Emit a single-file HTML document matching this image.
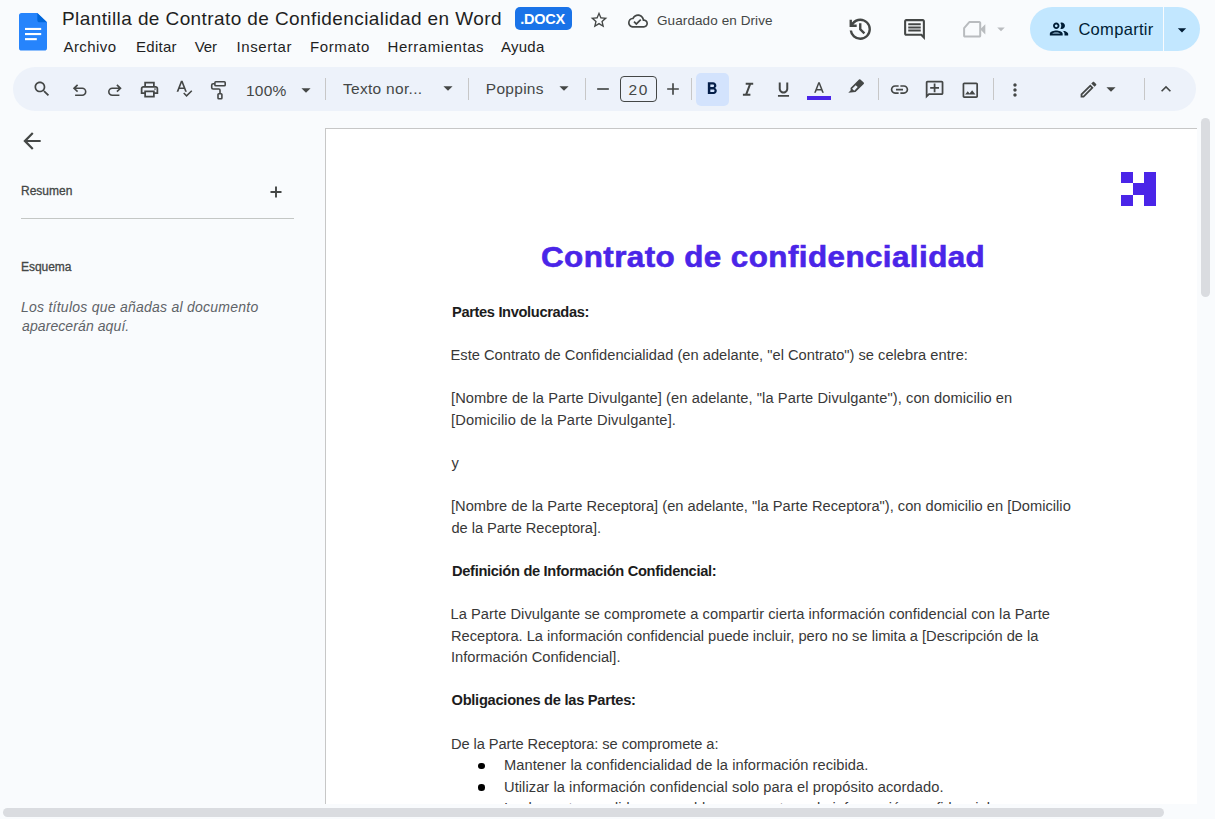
<!DOCTYPE html>
<html lang="es">
<head>
<meta charset="utf-8">
<title>Plantilla de Contrato de Confidencialidad en Word</title>
<style>
*{box-sizing:border-box;margin:0;padding:0}
html,body{width:1215px;height:819px;overflow:hidden}
body{background:#f9fbfd;font-family:"Liberation Sans",sans-serif;color:#1f1f1f;position:relative}
.abs{position:absolute}
.t{position:absolute;white-space:nowrap;line-height:1}
svg{position:absolute;overflow:visible}
.ic{fill:#444746}
/* header */
#title{left:62px;top:9px;font-size:18px;color:#1f1f1f}
.menu{top:39px;font-size:14.5px;color:#1f1f1f}
#badge{left:515px;top:7px;width:57px;height:23.300px;border-radius:5px;background:#1a73e8}
#badget{left:520px;top:11px;font-size:13px;font-weight:bold;color:#fff}
#saved{left:657px;top:13px;font-size:13px;color:#444746}
#share{left:1030px;top:7px;width:170px;height:44px;border-radius:22px;background:#c2e7ff}
#sharesep{left:1163px;top:7px;width:1px;height:44px;background:#f9fbfd}
#sharet{left:1077px;top:20px;font-size:16px;color:#001d35}
/* toolbar */
#toolbar{left:13px;top:67px;width:1183px;height:44px;border-radius:22px;background:#edf2fa}
.sep{position:absolute;top:78px;width:1px;height:22px;background:#c7c7c7}
.tb{top:82px;font-size:15px;color:#444746}
#fsbox{left:620px;top:76px;width:37px;height:26px;border:1px solid #444746;border-radius:4px}
#boldbg{left:696px;top:73px;width:33px;height:33px;border-radius:5px;background:#d3e3fd}
#colorbar{left:807px;top:96px;width:24px;height:4px;background:#4a25e8}
/* sidebar */
.side{font-family:"Liberation Sans",sans-serif}
#resumen{color:#444746;-webkit-text-stroke:0.300px #444746}
#esquema{color:#444746;-webkit-text-stroke:0.300px #444746}
#sideline{left:21px;top:218px;width:273px;height:1px;background:#c4c7c5}
.hint{left:21px;font-size:14px;font-style:italic;color:#5f6368}
/* page */
#page{left:325px;top:128px;width:872px;height:676px;background:#fff;border-left:1px solid #c7c7c7;border-top:1px solid #c7c7c7;overflow:hidden}
#vtrack{left:1197px;top:120px;width:18px;height:684px;background:#f9fbfd}
#vthumb{left:1201px;top:118px;width:9px;height:179px;border-radius:5px;background:#dadce0}
#hthumb{left:3px;top:808px;width:1161px;height:9px;border-radius:5px;background:#dadce0}
#h1{font-weight:bold;color:#4a25e8;-webkit-text-stroke:0.600px #4a25e8;transform:scaleX(1.063);transform-origin:0 0}
.b{font-size:14.67px;color:#383838}
.bb{font-size:14.67px;color:#1c1c1c;font-weight:bold}
.dot{position:absolute;width:6.600px;height:6.600px;border-radius:50%;background:#000;left:152.400px}
#d1{top:633.800px}#d2{top:655.400px}#d3{top:677px}
#title{left:62.00px;top:8.62px;letter-spacing:0.406px;font-size:19px}
#badget{left:520.20px;top:11.73px;letter-spacing:-0.250px;font-size:14.5px}
#saved{left:657.00px;top:13.57px;letter-spacing:0.094px;font-size:13.5px}
#m1{left:87.50px;top:39.30px;letter-spacing:0.433px;font-size:15px}
#m2{left:88.00px;top:39.30px;letter-spacing:0.280px;font-size:15px}
#m3{left:233.20px;top:39.30px;letter-spacing:-0.100px;font-size:15px}
#m4{left:212.50px;top:39.30px;letter-spacing:0.600px;font-size:15px}
#m5{left:262.00px;top:39.30px;letter-spacing:0.600px;font-size:15px}
#m6{left:363.50px;top:39.30px;letter-spacing:0.545px;font-size:15px}
#m7{left:501.00px;top:39.30px;letter-spacing:0.250px;font-size:15px}
#sharet{left:1078.40px;top:20.63px;letter-spacing:0.312px;font-size:16.5px}
#zoom{left:246.00px;top:82.68px;letter-spacing:0.250px;font-size:15.5px}
#style{left:343.00px;top:80.88px;letter-spacing:0.295px;font-size:15.5px}
#font{left:485.80px;top:80.88px;letter-spacing:0.283px;font-size:15.5px}
#fs{left:628.60px;top:81.98px;letter-spacing:1.600px;font-size:15.5px}
#resumen{left:21.00px;top:184.84px;letter-spacing:0.000px;font-size:12px}
#esquema{left:21.00px;top:261.04px;letter-spacing:-0.033px;font-size:12px}
#hint1{left:21.00px;top:300.35px;letter-spacing:0.247px;font-size:14px}
#hint2{left:22.00px;top:319.15px;letter-spacing:0.093px;font-size:14px}
#h1{left:215.20px;top:112.53px;letter-spacing:0.407px;font-size:29.5px}
#p1{left:126.00px;top:175.58px;letter-spacing:-0.358px;font-size:14.67px}
#p2{left:124.50px;top:218.78px;letter-spacing:0.013px;font-size:14.67px}
#p3{left:125.00px;top:261.98px;letter-spacing:0.078px;font-size:14.67px}
#p4{left:125.00px;top:283.58px;letter-spacing:0.147px;font-size:14.67px}
#p5{left:125.50px;top:326.78px;letter-spacing:0.000px;font-size:14.67px}
#p6{left:125.00px;top:369.98px;letter-spacing:0.009px;font-size:14.67px}
#p7{left:125.50px;top:391.58px;letter-spacing:-0.055px;font-size:14.67px}
#p8{left:126.00px;top:434.78px;letter-spacing:-0.321px;font-size:14.67px}
#p9{left:124.50px;top:477.98px;letter-spacing:0.054px;font-size:14.67px}
#p10{left:125.00px;top:499.58px;letter-spacing:-0.009px;font-size:14.67px}
#p11{left:125.00px;top:521.18px;letter-spacing:0.000px;font-size:14.67px}
#p12{left:125.50px;top:564.38px;letter-spacing:-0.269px;font-size:14.67px}
#p13{left:125.00px;top:607.58px;letter-spacing:-0.079px;font-size:14.67px}
#p14{left:178.00px;top:629.18px;letter-spacing:0.047px;font-size:14.67px}
#p15{left:178.00px;top:650.78px;letter-spacing:0.065px;font-size:14.67px}
#p16{left:178.00px;top:672.38px;letter-spacing:0.006px;font-size:14.67px}
</style>
</head>
<body>
<!-- HEADER -->
<div id="hdr">
<svg id="docsicon" style="left:18.6px;top:13.2px" width="28" height="37.6" viewBox="0 0 28 37.6">
<path d="M2.6 0H18.3L28 9.3V35a2.6 2.6 0 0 1-2.6 2.6H2.6A2.6 2.6 0 0 1 0 35V2.6A2.6 2.6 0 0 1 2.6 0z" fill="#2684fc"/>
<path d="M18.3 0L28 9.3H20.9a2.6 2.6 0 0 1-2.6-2.6z" fill="#0066da"/>
<rect x="6" y="14.9" width="16.2" height="2.1" fill="#fff"/><rect x="6" y="20" width="16.2" height="2.1" fill="#fff"/><rect x="6" y="25.1" width="11.8" height="2.1" fill="#fff"/>
</svg>
<div class="t" id="title">Plantilla de Contrato de Confidencialidad en Word</div>
<div class="abs" id="badge"></div><div class="t" id="badget">.DOCX</div>
<svg class="ic" id="star" style="left:588.5px;top:10.4px" width="20" height="20" viewBox="0 0 24 24"><path d="M22 9.24l-7.19-.62L12 2 9.190 8.630 2 9.240l5.460 4.730L5.820 21 12 17.270 18.180 21l-1.630-7.030L22 9.240zM12 15.400l-3.760 2.270 1-4.280-3.320-2.880 4.380-.380L12 6.100l1.710 4.040 4.380.380-3.320 2.880 1 4.280L12 15.400z"/></svg>
<svg class="ic" id="cloud" style="left:627.5px;top:10.5px" width="20" height="20" viewBox="0 0 24 24"><path d="M19.350 10.040C18.670 6.590 15.640 4 12 4 9.110 4 6.600 5.640 5.350 8.040 2.340 8.360 0 10.910 0 14c0 3.310 2.690 6 6 6h13c2.760 0 5-2.240 5-5 0-2.640-2.050-4.780-4.650-4.960zM19 18H6c-2.210 0-4-1.790-4-4 0-2.050 1.530-3.760 3.560-3.970l1.070-.110.500-.950C8.080 7.140 9.940 6 12 6c2.620 0 4.880 1.860 5.390 4.430l.300 1.500 1.530.110c1.560.100 2.780 1.410 2.780 2.960 0 1.650-1.350 3-3 3zm-9-3.820l-2.090-2.090L6.500 13.500 10 17l6.010-6.010-1.410-1.410z"/></svg>
<div class="t" id="saved">Guardado en Drive</div>
<div class="t menu" id="m1" style="left:63.5px">Archivo</div>
<div class="t menu" id="m2" style="left:136px">Editar</div>
<div class="t menu" id="m3" style="left:194.8px">Ver</div>
<div class="t menu" id="m4" style="left:236.5px">Insertar</div>
<div class="t menu" id="m5" style="left:310px">Formato</div>
<div class="t menu" id="m6" style="left:387.5px">Herramientas</div>
<div class="t menu" id="m7" style="left:501px">Ayuda</div>
<svg class="ic" id="history" style="left:845.95px;top:14.85px" width="28.500" height="28.500" viewBox="0 -960 960 960"><path d="M480-120q-138 0-240.500-91.500T122-440h82q14 104 92.500 172T480-200q117 0 198.500-81.500T760-480q0-117-81.500-198.500T480-760q-69 0-129 32t-101 88h110v80H120v-240h80v94q51-64 124.500-99T480-840q75 0 140.500 28.500t114 77q48.500 48.500 77 114T840-480q0 75-28.500 140.500t-77 114q-48.500 48.500-114 77T480-120Zm112-192L440-464v-216h80v184l128 128-56 56Z"/></svg>
<svg class="ic" id="comment" style="left:902.1px;top:17px" width="25" height="25" viewBox="0 -960 960 960"><path d="M240-400h480v-80H240v80Zm0-120h480v-80H240v80Zm0-120h480v-80H240v80ZM880-80 720-240H160q-33 0-56.500-23.500T80-320v-480q0-33 23.500-56.500T160-880h640q33 0 56.500 23.500T880-800v720ZM160-320h594l46 45v-525H160v480Zm0 0v-480 480Z"/></svg>
<svg id="video" style="left:960px;top:17px" width="28" height="24" viewBox="0 0 28 24"><path d="M4.100 11.200L9.300 5.100H19.400a.800.800 0 0 1 .8.800V18.800a.800.800 0 0 1-.8.800H4.900a.800.800 0 0 1-.8-.8z" fill="none" stroke="#b9bcbf" stroke-width="2" stroke-linejoin="round"/><path d="M20.200 12.300L25.300 7.200V17.400z" fill="#b9bcbf"/></svg>
<svg id="videodd" style="left:992px;top:19.600px;fill:#b9bcbf" width="18" height="18" viewBox="0 0 24 24"><path d="M7 10l5 5 5-5z"/></svg>
<div class="abs" id="share"></div><div class="abs" id="sharesep"></div>
<svg id="people" style="left:1048px;top:17.800px;fill:#001d35" width="22" height="22" viewBox="0 0 24 24"><path d="M9 13.750c-2.340 0-7 1.170-7 3.500V19h14v-1.750c0-2.330-4.660-3.500-7-3.500zM4.340 17c.840-.580 2.870-1.250 4.660-1.250s3.820.670 4.660 1.250H4.340zM9 12c1.930 0 3.500-1.570 3.500-3.500S10.930 5 9 5 5.500 6.570 5.500 8.500 7.070 12 9 12zm0-5c.830 0 1.500.670 1.500 1.500S9.830 10 9 10s-1.500-.670-1.500-1.500S8.170 7 9 7zm7.040 6.810c1.160.840 1.960 1.960 1.960 3.440V19h4v-1.750c0-2.020-3.500-3.170-5.960-3.440zM15 12c1.930 0 3.500-1.570 3.500-3.500S16.930 5 15 5c-.540 0-1.040.130-1.500.350.630.890 1 1.980 1 3.150s-.370 2.260-1 3.150c.460.220.960.350 1.500.350z"/></svg>
<div class="t" id="sharet">Compartir</div>
<svg id="sharedd" style="left:1172.200px;top:19.800px;fill:#001d35" width="20" height="20" viewBox="0 0 24 24"><path d="M7 10l5 5 5-5z"/></svg>
</div>
<!-- TOOLBAR -->
<div class="abs" id="toolbar"></div>
<svg class="ic" id="i_search" style="left:32.30px;top:79.30px" width="20" height="20" viewBox="0 0 24 24"><path d="M15.5 14h-.79l-.28-.27C15.41 12.59 16 11.11 16 9.5 16 5.91 13.09 3 9.5 3S3 5.91 3 9.5 5.91 16 9.5 16c1.61 0 3.09-.59 4.23-1.57l.27.28v.79l5 4.990L20.490 19l-4.990-5zm-6 0C7.010 14 5 11.990 5 9.500S7.010 5 9.500 5 14 7.010 14 9.500 11.990 14 9.500 14z"/></svg>
<svg id="i_undo" style="left:70px;top:80px" width="20" height="20" viewBox="0 0 20 20" fill="none" stroke="#444746" stroke-width="1.600"><path d="M7.600 4.900L4 8.300l3.600 3.400M4.300 8.300H12.200a3.500 3.500 0 0 1 0 7H5.100"/></svg>
<svg id="i_redo" style="left:105px;top:80px" width="20" height="20" viewBox="0 0 20 20" fill="none" stroke="#444746" stroke-width="1.600"><path d="M11.900 4.900L15.500 8.300l-3.600 3.400M15.200 8.300H7.300a3.500 3.500 0 0 0 0 7H14.400"/></svg>
<svg class="ic" id="i_print" style="left:138.95px;top:79.30px" width="21" height="21" viewBox="0 0 24 24"><path d="M19 8h-1V3H6v5H5c-1.660 0-3 1.340-3 3v6h4v4h12v-4h4v-6c0-1.660-1.340-3-3-3zM8 5h8v3H8V5zm8 12v2H8v-4h8v2zm2-2v-2H6v2H4v-4c0-.550.450-1 1-1h14c.550 0 1 .450 1 1v4h-2z"/></svg>
<svg class="ic" id="i_printdot" style="left:153.700px;top:88.400px" width="2" height="2" viewBox="0 0 2 2"><circle cx="1" cy="1" r="0.85"/></svg>
<svg class="ic" id="i_spell" style="left:175px;top:79px" width="20" height="20" viewBox="0 0 20 20"><path d="M5.900 1.800h1.700l4.300 11h-1.800l-1-2.700H4.400l-1 2.700H1.600zM5 8.600h3.500L6.750 3.900z"/><path d="M8.200 14.600l1.050-1.050 2.300 2.300 4.700-4.700 1.050 1.050-5.750 5.750z"/></svg>
<svg id="i_paint" style="left:208px;top:80px" width="20" height="20" viewBox="0 0 20 20" fill="none" stroke="#444746" stroke-width="1.600" stroke-linejoin="round"><rect x="6.900" y="1.800" width="10.300" height="4" rx="0.900"/><path d="M6.900 3.800H5.200a1.500 1.500 0 0 0-1.500 1.500V7.500a1.500 1.500 0 0 0 1.500 1.500H10.900a1.100 1.100 0 0 1 1.100 1.100V13.800"/><rect x="10" y="13.800" width="3.900" height="5" rx="0.800"/></svg>
<div class="t tb" id="zoom">100%</div>
<svg class="ic" id="dd1" style="left:295.20px;top:78.50px" width="22" height="22" viewBox="0 0 24 24"><path d="M7 10l5 5 5-5z"/></svg>
<div class="sep" style="left:325px"></div>
<div class="t tb" id="style">Texto nor...</div>
<svg class="ic" id="dd2" style="left:437.00px;top:77.05px" width="22" height="22" viewBox="0 0 24 24"><path d="M7 10l5 5 5-5z"/></svg>
<div class="sep" style="left:468px"></div>
<div class="t tb" id="font">Poppins</div>
<svg class="ic" id="dd3" style="left:552.60px;top:77.05px" width="22" height="22" viewBox="0 0 24 24"><path d="M7 10l5 5 5-5z"/></svg>
<div class="sep" style="left:585px"></div>
<svg class="ic" id="i_minus" style="left:592.50px;top:79.30px" width="20" height="20" viewBox="0 0 24 24"><path d="M19 13H5v-2h14v2z"/></svg>
<div class="abs" id="fsbox"></div><div class="t tb" id="fs">20</div>
<svg class="ic" id="i_plus" style="left:662.80px;top:79.30px" width="20" height="20" viewBox="0 0 24 24"><path d="M19 13h-6v6h-2v-6H5v-2h6V5h2v6h6v2z"/></svg>
<div class="sep" style="left:691px"></div>
<div class="abs" id="boldbg"></div>
<svg class="ic" id="i_bold" style="left:702.30px;top:79.30px;fill:#041e49" width="20" height="20" viewBox="0 0 24 24"><path d="M15.600 10.790c.970-.670 1.650-1.770 1.650-2.790 0-2.260-1.750-4-4-4H7v14h7.040c2.090 0 3.710-1.700 3.710-3.790 0-1.520-.860-2.820-2.150-3.420zM10 6.500h3c.830 0 1.500.670 1.500 1.500s-.670 1.500-1.500 1.500h-3v-3zm3.500 9H10v-3h3.500c.830 0 1.500.670 1.500 1.500s-.670 1.500-1.500 1.500z"/></svg>
<svg id="i_italic" style="left:737.8px;top:79.3px" width="20" height="20" viewBox="0 0 20 20" fill="none" stroke="#444746" stroke-width="2"><path d="M7.700 4.800h7.500M4.900 15.800h7.500M12.200 4.800L8 15.800"/></svg>
<svg class="ic" id="i_under" style="left:773.80px;top:79.70px" width="19" height="19" viewBox="0 0 24 24"><path d="M12 17c3.310 0 6-2.690 6-6V3h-2.500v8c0 1.930-1.570 3.500-3.500 3.500S8.500 12.930 8.500 11V3H6v8c0 3.310 2.690 6 6 6zm-7 2v2h14v-2H5z"/></svg>
<svg class="ic" id="i_textA" style="left:809.80px;top:80.00px" width="18" height="18" viewBox="0 0 24 24"><path d="M11 3L5.500 17h2.250l1.120-3h6.250l1.120 3h2.250L13 3h-2zm-1.380 9L12 5.670 14.380 12H9.620z"/></svg>
<div class="abs" id="colorbar"></div>
<svg class="ic" id="i_hl" style="left:846px;top:77px" width="20" height="20" viewBox="0 0 20 20"><path fill-rule="evenodd" d="M13 2.500a1 1 0 0 1 1.400 0L17.700 5.600a1 1 0 0 1 0 1.400L9.500 15.100 2.300 15.800 4.700 13.200 4.500 11.100zM6.100 11.800L9.700 8.300 11.700 10.100 8.300 13.700z"/></svg>
<div class="sep" style="left:878px"></div>
<svg class="ic" id="i_link" style="left:889.00px;top:78.70px" width="21" height="21" viewBox="0 0 24 24"><path d="M3.900 12c0-1.710 1.390-3.100 3.100-3.100h4V7H7c-2.760 0-5 2.240-5 5s2.240 5 5 5h4v-1.900H7c-1.710 0-3.100-1.390-3.100-3.100zM8 13h8v-2H8v2zm9-6h-4v1.900h4c1.710 0 3.100 1.390 3.100 3.100s-1.390 3.100-3.100 3.100h-4V17h4c2.760 0 5-2.240 5-5s-2.240-5-5-5z"/></svg>
<svg class="ic" id="i_addc" style="left:924.40px;top:79.00px" width="21.2" height="21.2" viewBox="0 0 24 24"><path transform="translate(24,0) scale(-1,1)" d="M22 4c0-1.100-.900-2-2-2H4c-1.100 0-2 .900-2 2v12c0 1.100.900 2 2 2h14l4 4V4zm-2 13.170L18.830 16H4V4h16v13.170zM13 5h-2v4H7v2h4v4h2v-4h4V9h-4z"/></svg>
<svg class="ic" id="i_image" style="left:960.10px;top:79.60px" width="20.6" height="20.6" viewBox="0 0 24 24"><path d="M19 5v14H5V5h14m0-2H5c-1.100 0-2 .900-2 2v14c0 1.100.900 2 2 2h14c1.100 0 2-.900 2-2V5c0-1.100-.900-2-2-2zm-4.860 8.860l-3 3.870L9 13.140 6 17h12l-3.860-5.140z"/></svg>
<div class="sep" style="left:993.3px"></div>
<svg class="ic" id="i_more" style="left:1005.40px;top:80.00px" width="20" height="20" viewBox="0 0 24 24"><path d="M12 8c1.100 0 2-.900 2-2s-.900-2-2-2-2 .900-2 2 .900 2 2 2zm0 2c-1.100 0-2 .900-2 2s.900 2 2 2 2-.900 2-2-.900-2-2-2zm0 6c-1.100 0-2 .900-2 2s.900 2 2 2 2-.900 2-2-.900-2-2-2z"/></svg>
<svg class="ic" id="i_edit" style="left:1078.30px;top:78.70px" width="21" height="21" viewBox="0 0 24 24"><path d="M14.060 9.020l.920.920L5.920 19H5v-.920l9.060-9.060M17.660 3c-.250 0-.510.100-.700.290l-1.830 1.830 3.750 3.750 1.830-1.830c.390-.390.390-1.020 0-1.410l-2.340-2.340c-.200-.200-.450-.290-.710-.290zm-3.600 3.190L3 17.250V21h3.750L17.810 9.940l-3.750-3.750z"/></svg>
<svg class="ic" id="dd4" style="left:1100.00px;top:77.60px" width="22" height="22" viewBox="0 0 24 24"><path d="M7 10l5 5 5-5z"/></svg>
<div class="sep" style="left:1144px"></div>
<svg class="ic" id="i_up" style="left:1156.30px;top:79.30px" width="20" height="20" viewBox="0 0 24 24"><path d="M12 8l-6 6 1.410 1.410L12 10.830l4.590 4.580L18 14z"/></svg>
<!-- SIDEBAR -->
<svg class="ic" id="i_back" style="left:19.30px;top:127.80px" width="26" height="26" viewBox="0 0 24 24"><path d="M20 11H7.830l5.590-5.590L12 4l-8 8 8 8 1.410-1.410L7.830 13H20v-2z"/></svg>
<div class="t" id="resumen">Resumen</div>
<svg id="i_plus2" style="left:269.800px;top:185.600px" width="12" height="12" viewBox="0 0 12 12" fill="none" stroke="#444746" stroke-width="1.900"><path d="M6 .500v11M.500 6h11"/></svg>
<div class="abs" id="sideline"></div>
<div class="t" id="esquema">Esquema</div>
<div class="t hint" id="hint1">Los títulos que añadas al documento</div>
<div class="t hint" id="hint2">aparecerán aquí.</div>
<!-- PAGE -->
<div class="abs" id="page">
<svg id="logo" style="left:795px;top:43px" width="35" height="34.200" viewBox="0 0 3 3" preserveAspectRatio="none" fill="#4a25e8" shape-rendering="crispEdges"><rect x="0" y="0" width="1" height="1"/><rect x="2" y="0" width="1" height="3"/><rect x="1" y="1" width="1.100" height="1"/><rect x="0" y="2" width="1" height="1"/></svg>
<div class="t" id="h1">Contrato de confidencialidad</div>
<div class="t bb" id="p1">Partes Involucradas:</div>
<div class="t b" id="p2">Este Contrato de Confidencialidad (en adelante, "el Contrato") se celebra entre:</div>
<div class="t b" id="p3">[Nombre de la Parte Divulgante] (en adelante, "la Parte Divulgante"), con domicilio en</div>
<div class="t b" id="p4">[Domicilio de la Parte Divulgante].</div>
<div class="t b" id="p5">y</div>
<div class="t b" id="p6">[Nombre de la Parte Receptora] (en adelante, "la Parte Receptora"), con domicilio en [Domicilio</div>
<div class="t b" id="p7">de la Parte Receptora].</div>
<div class="t bb" id="p8">Definición de Información Confidencial:</div>
<div class="t b" id="p9">La Parte Divulgante se compromete a compartir cierta información confidencial con la Parte</div>
<div class="t b" id="p10">Receptora. La información confidencial puede incluir, pero no se limita a [Descripción de la</div>
<div class="t b" id="p11">Información Confidencial].</div>
<div class="t bb" id="p12">Obligaciones de las Partes:</div>
<div class="t b" id="p13">De la Parte Receptora: se compromete a:</div>
<div class="t b" id="p14">Mantener la confidencialidad de la información recibida.</div>
<div class="t b" id="p15">Utilizar la información confidencial solo para el propósito acordado.</div>
<div class="t b" id="p16">Implementar medidas razonables para proteger la información confidencial.</div>
<div class="dot" id="d1"></div><div class="dot" id="d2"></div><div class="dot" id="d3"></div>
</div>
<div class="abs" id="vtrack"></div>
<div class="abs" id="vthumb"></div>
<div class="abs" id="hthumb"></div>
</body>
</html>
